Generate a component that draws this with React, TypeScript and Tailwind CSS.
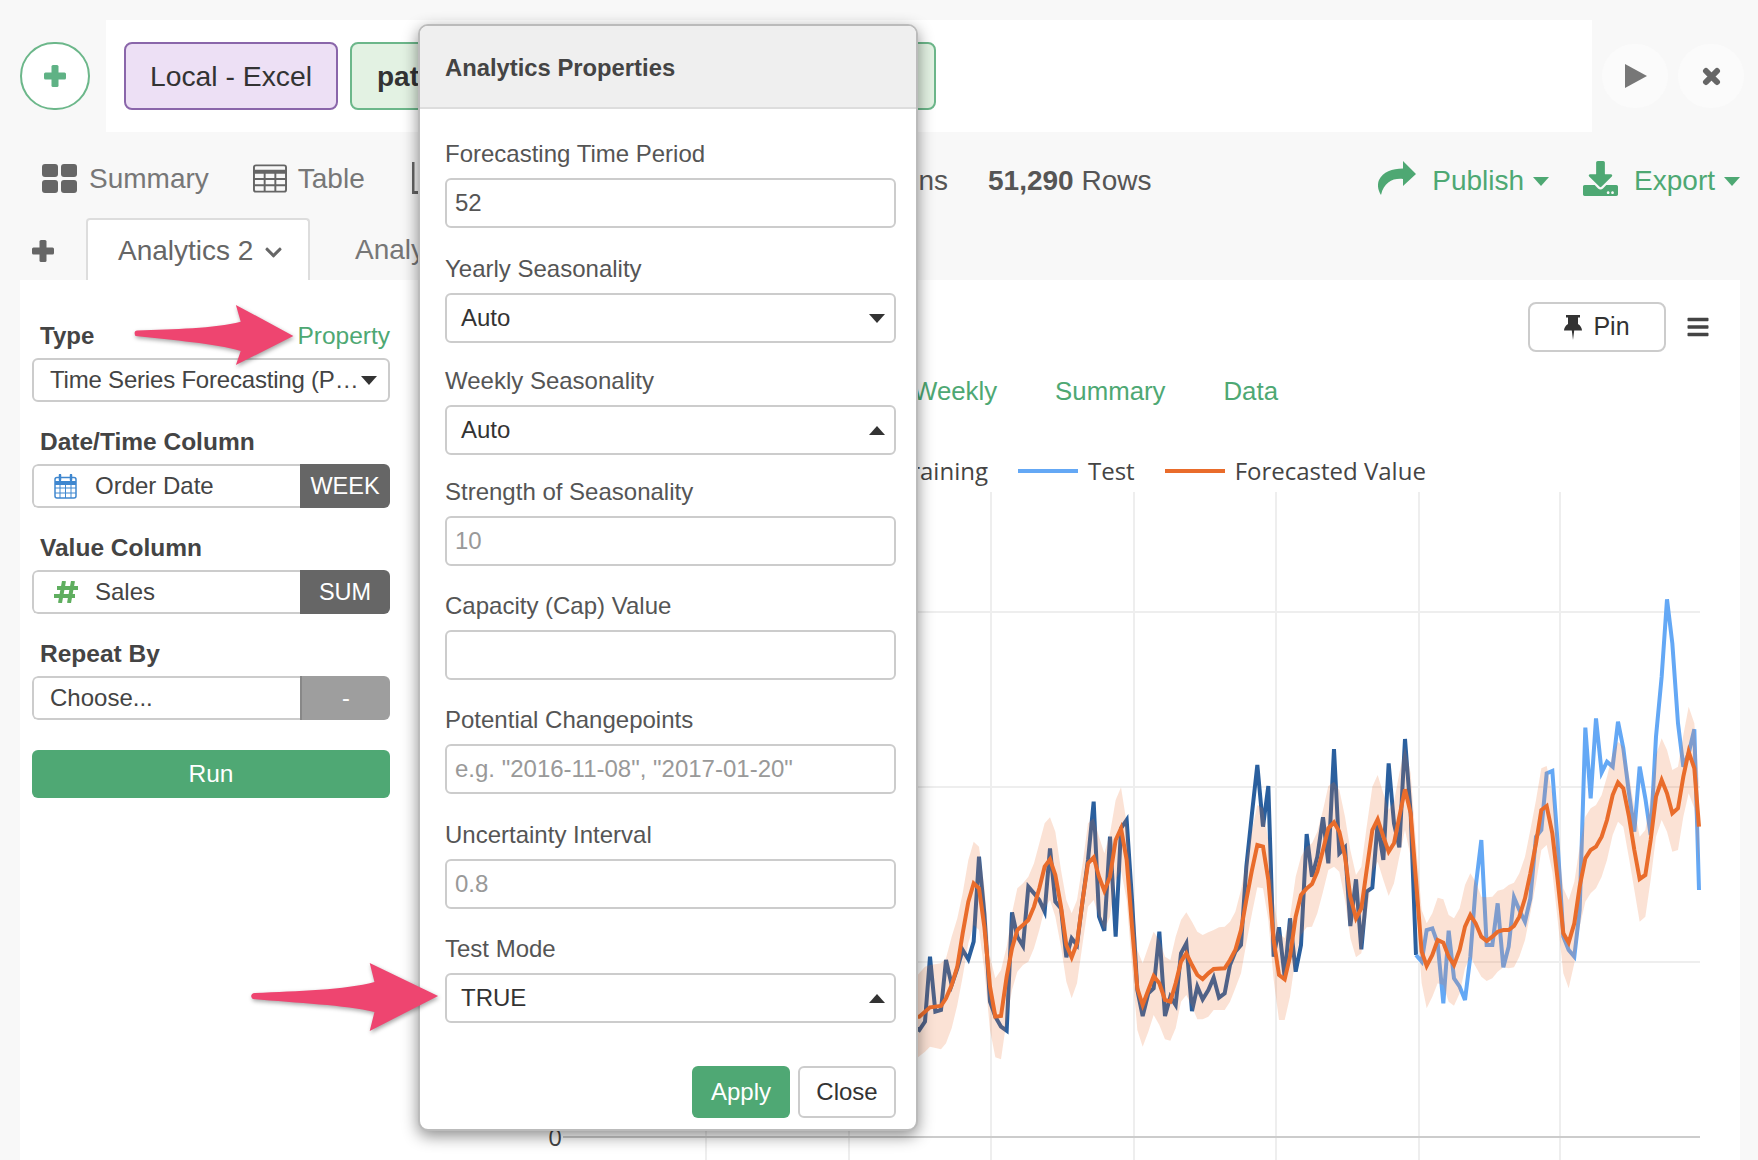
import { FaChevronDown, FaBars, FaDownload } from "react-icons/fa";

// chart points were read off two crops of the picture, so each set keeps its crop's origin
const toPage = (crop: string, ox: number, oy: number) =>
  crop
    .trim()
    .split(/;\s*/)
    .map((p) => {
      const [x, y] = p.split(",").map(Number);
      return [ox + x / 3, oy + y / 3];
    });

const series = (a: string, b: string) => [...toPage(a, 900, 700), ...toPage(b, 1300, 560)];
const pts = (list: number[][]) => list.map((p) => p.join(",")).join(" ");

const training = series(
  "50,985; 58,990; 75,965; 90,770; 106,935; 123,930; 138,780; 155,855; 172,805; 188,750; 205,778; 221,725; 237,470; 253,640; 270,905; 286,950; 303,980; 320,992; 336,637; 352,710; 369,738; 385,560; 402,580; 418,600; 434,635; 450,445; 466,605; 483,625; 499,772; 515,715; 531,735; 548,600; 564,480; 581,305; 597,650; 613,692; 630,410; 647,710; 663,385; 680,360; 696,600; 712,870; 728,948; 745,880; 761,865; 778,695; 795,948; 811,890; 827,915; 843,760; 859,730; 876,933; 892,860; 908,898; 925,870; 941,833; 957,893; 974,880; 990,795; 1006,755; 1023,735; 1039,500; 1056,340; 1072,195; 1089,380; 1105,258; 1121,770; 1137,682; 1154,830; 1170,655; 1187,815; 1203,735; 1220,402; 1236,530; 1252,470; 1269,352; 1285,490",
  "102,567; 118,880; 135,862; 151,1098; 168,958; 184,1168; 200,995; 217,983; 233,790; 250,900; 266,610; 282,790; 298,862; 315,537; 332,760; 348,1185"
);

const test = toPage(
  "348,1185; 365,1205; 380,1110; 397,1105; 413,1150; 430,1330; 446,1112; 462,1255; 479,1280; 495,1320; 511,1190; 527,980; 544,840; 560,1155; 577,1155; 593,1030; 610,1222; 626,1160; 642,1012; 658,1050; 675,1085; 691,1015; 708,830; 724,810; 740,640; 757,633; 773,850; 790,1130; 806,1170; 823,1190; 839,1050; 856,503; 872,715; 888,475; 905,638; 921,605; 938,620; 954,485; 970,565; 987,700; 1003,815; 1019,620; 1036,715; 1052,825; 1068,530; 1085,350; 1101,118; 1117,250; 1134,490; 1150,620; 1166,580; 1183,508; 1197,990",
  1300,
  560
);

const forecast = series(
  "50,950; 58,950; 75,935; 90,922; 123,918; 138,895; 155,855; 172,800; 188,700; 205,605; 221,550; 237,565; 253,680; 270,860; 286,950; 303,948; 320,830; 336,745; 352,690; 369,675; 385,660; 402,620; 418,565; 434,500; 450,478; 466,525; 483,620; 499,735; 515,772; 531,730; 548,600; 564,490; 581,472; 597,530; 613,572; 630,530; 647,420; 663,385; 680,480; 696,680; 712,865; 728,915; 745,870; 761,828; 778,850; 795,900; 811,905; 827,850; 843,785; 859,760; 876,795; 892,825; 908,837; 925,820; 941,807; 974,805; 990,780; 1006,750; 1023,690; 1039,600; 1056,510; 1072,435; 1089,440; 1105,540; 1121,720; 1137,825; 1154,838; 1170,770; 1187,650; 1203,585; 1220,565; 1236,552; 1252,515; 1269,450; 1285,385",
  "102,787; 118,815; 135,890; 151,1010; 168,1075; 184,1045; 200,930; 217,810; 233,778; 250,830; 266,875; 282,850; 298,770; 315,688; 332,760; 348,960; 365,1175; 380,1218; 397,1185; 413,1140; 430,1148; 446,1190; 462,1215; 479,1170; 495,1100; 511,1065; 527,1090; 544,1130; 560,1143; 577,1130; 593,1115; 610,1110; 626,1110; 642,1098; 658,1070; 675,1015; 691,940; 708,850; 724,750; 740,738; 757,820; 773,960; 790,1120; 806,1148; 823,1090; 839,980; 856,895; 872,870; 888,860; 905,830; 921,780; 938,705; 954,667; 970,685; 987,770; 1003,870; 1019,957; 1036,945; 1052,840; 1068,710; 1085,660; 1101,700; 1117,760; 1134,745; 1150,650; 1166,575; 1183,625; 1197,800"
);

const upper = series(
  "50,828; 75,800; 90,795; 123,790; 138,775; 155,710; 172,655; 188,580; 205,480; 221,425; 237,440; 253,560; 270,770; 286,835; 303,810; 320,740; 336,640; 352,565; 369,550; 385,530; 402,490; 418,430; 434,370; 450,352; 466,395; 483,510; 499,600; 515,640; 531,600; 548,490; 564,370; 581,355; 597,410; 613,460; 630,400; 647,300; 663,262; 680,370; 696,570; 712,750; 728,790; 745,740; 761,695; 778,720; 795,770; 811,780; 827,710; 843,660; 859,637; 876,665; 892,695; 908,705; 925,697; 941,690; 957,682; 974,680; 990,665; 1006,635; 1023,570; 1039,480; 1056,390; 1072,315; 1089,325; 1105,420; 1121,600; 1137,700; 1154,715; 1170,650; 1187,530; 1203,470; 1220,440; 1236,430; 1252,395; 1269,330; 1285,258",
  "102,665; 118,690; 135,770; 151,870; 168,945; 184,920; 200,800; 217,680; 233,645; 250,700; 266,750; 282,725; 298,640; 315,560; 332,640; 348,850; 365,1050; 380,1090; 397,1060; 413,1013; 430,1018; 446,1065; 462,1075; 479,1045; 495,975; 511,940; 527,965; 544,1010; 560,1012; 577,1010; 593,992; 610,988; 626,975; 642,968; 658,940; 675,890; 691,810; 708,720; 724,625; 740,618; 757,700; 773,840; 790,985; 806,1020; 823,965; 839,860; 856,770; 872,745; 888,735; 905,705; 921,650; 938,580; 954,545; 970,560; 987,645; 1003,745; 1019,830; 1036,810; 1052,715; 1068,585; 1085,535; 1101,570; 1117,630; 1134,620; 1150,525; 1166,440; 1183,490; 1197,670"
);

const lower = series(
  "50,1075; 75,1055; 90,1040; 123,1048; 138,1030; 155,985; 172,915; 188,830; 205,730; 221,675; 237,690; 253,810; 270,990; 286,1072; 303,1078; 320,960; 336,870; 352,815; 369,795; 385,785; 402,745; 418,690; 434,625; 450,600; 466,650; 483,740; 499,845; 515,895; 531,850; 548,730; 564,620; 581,600; 597,650; 613,690; 630,650; 647,540; 663,510; 680,600; 696,800; 712,990; 728,1040; 745,995; 761,945; 778,975; 795,1018; 811,1022; 827,985; 843,905; 859,885; 876,920; 892,958; 908,958; 925,950; 941,930; 974,930; 990,905; 1006,865; 1023,820; 1039,730; 1056,640; 1072,562; 1089,565; 1105,660; 1121,840; 1137,960; 1154,960; 1170,890; 1187,770; 1203,705; 1220,682; 1236,680; 1252,640; 1269,575; 1285,510",
  "102,920; 118,935; 135,1020; 151,1135; 168,1192; 184,1180; 200,1065; 217,935; 233,905; 250,960; 266,1008; 282,970; 298,890; 315,810; 332,890; 348,1050; 365,1270; 380,1345; 397,1310; 413,1270; 430,1275; 446,1325; 462,1337; 479,1300; 495,1225; 511,1190; 527,1220; 544,1250; 560,1263; 577,1255; 593,1235; 610,1222; 626,1225; 642,1222; 658,1190; 675,1140; 691,1060; 708,970; 724,870; 740,855; 757,935; 773,1080; 790,1240; 806,1285; 823,1210; 839,1100; 856,1025; 872,1000; 888,985; 905,950; 921,900; 938,825; 954,785; 970,800; 987,895; 1003,990; 1019,1085; 1036,1070; 1052,960; 1068,830; 1085,780; 1101,815; 1117,875; 1134,870; 1150,770; 1166,700; 1183,745; 1197,920"
);

const band = [...upper, ...[...lower].reverse()];

function Caret({ up, className }: { up?: boolean; className: string }) {
  return (
    <svg viewBox="0 0 16 9" className={className} fill="currentColor">
      <path d={up ? "M8 0 L16 9 H0 Z" : "M0 0 H16 L8 9 Z"} />
    </svg>
  );
}

function PlusIcon({ className }: { className: string }) {
  return (
    <svg viewBox="0 0 22 22" className={className} fill="currentColor">
      <rect x="7.500" y="0" width="7" height="22" rx="1.500" />
      <rect x="0" y="7.500" width="22" height="7" rx="1.500" />
    </svg>
  );
}

function CloseIcon() {
  return (
    <svg viewBox="0 0 19 19" className="w-[19px] h-[19px]" stroke="#666" strokeWidth="6" strokeLinecap="round">
      <path d="M4 4 L15 15 M15 4 L4 15" />
    </svg>
  );
}

function HashIcon() {
  return (
    <svg viewBox="0 0 24 22" className="w-[24px] h-[22px]" stroke="#5fae5f" strokeWidth="4">
      <path d="M10 0 L6 22 M19 0 L15 22 M3 7 H24 M0 15 H21" />
    </svg>
  );
}

function SummaryIcon() {
  return (
    <svg viewBox="0 0 35 29" className="w-[35px] h-[29px]" fill="#666">
      <rect x="0" y="0" width="16" height="13" rx="3" />
      <rect x="19" y="0" width="16" height="13" rx="3" />
      <rect x="0" y="16" width="16" height="13" rx="3" />
      <rect x="19" y="16" width="16" height="13" rx="3" />
    </svg>
  );
}

function TableIcon() {
  return (
    <svg viewBox="0 0 35 29" className="w-[34px] h-[29px]" fill="none" stroke="#666" strokeWidth="2">
      <rect x="1" y="1" width="33" height="27" rx="2" />
      <path d="M1 7.500 H34" strokeWidth="4" />
      <path d="M1 15 H34 M1 21.500 H34 M12 7 V28 M23 7 V28" />
    </svg>
  );
}

function ChartIcon() {
  return (
    <svg viewBox="0 0 35 32" className="w-[35px] h-[32px]" fill="#666">
      <path d="M0 0 H2.500 V29 H35 V32 H0 Z" />
      <rect x="8" y="17" width="6" height="9" />
      <rect x="17" y="8" width="6" height="18" />
    </svg>
  );
}

function ShareIcon() {
  return (
    <svg viewBox="0 0 38 34" className="w-[38px] h-[34px]" fill="#4ea873">
      <path d="M25 0 L38 13 L25 25 V18 C15 17 6 21 3 34 C0 29 -1 24 1 19 C5 11 14 7.500 25 7.500 Z" />
    </svg>
  );
}

function PinIcon() {
  return (
    <svg viewBox="0 0 18 25" className="w-[18px] h-[25px]" fill="#333">
      <path d="M2 0 H16 V2.500 H14 V9 C16.500 10.500 18 13 18 15.500 H10.200 L9 25 L7.800 15.500 H0 C0 13 1.500 10.500 4 9 V2.500 H2 Z" />
    </svg>
  );
}

function CalendarIcon() {
  return (
    <svg viewBox="0 0 23 25" className="w-[23px] h-[25px]" fill="none" stroke="#3f87cf" strokeWidth="1.500">
      <rect x="1" y="3.500" width="21" height="20.500" rx="2" />
      <path d="M1 9 H22" strokeWidth="4" />
      <path d="M1 14 H22 M1 19 H22 M6 9 V24 M11.500 9 V24 M17 9 V24" strokeWidth="1" />
      <path d="M6 1 V6 M17 1 V6" strokeWidth="2.500" strokeLinecap="round" />
    </svg>
  );
}

function Arrow({ className, d }: { className: string; d: string }) {
  return (
    <svg viewBox="0 0 200 70" preserveAspectRatio="none" className={className} fill="#ee4570">
      <path d={d} />
    </svg>
  );
}

function SideLabel({ children }: { children: string }) {
  return <div className="h-[30px] leading-[30px] px-2 text-[24.500px] font-bold text-[#444]">{children}</div>;
}

function ColumnField({
  icon,
  name,
  tag,
  tagClass,
}: {
  icon?: React.ReactNode;
  name: string;
  tag: string;
  tagClass: string;
}) {
  return (
    <div className="flex h-[44px] mt-[7px] mb-[25px] rounded-[6px] overflow-hidden">
      <div className="flex-1 flex items-center border-2 border-r-0 border-[#ccc] rounded-l-[6px]">
        {icon ? (
          <div className="w-[61px] pl-[20px] flex items-center shrink-0">{icon}</div>
        ) : (
          <div className="w-[16px] shrink-0" />
        )}
        <span className="text-[24px] text-[#444]">{name}</span>
      </div>
      <div className={`w-[90px] pt-[1px] flex items-center justify-center text-[23.500px] text-white ${tagClass}`}>
        {tag}
      </div>
    </div>
  );
}

const propertyFields = [
  { label: "Forecasting Time Period", value: "52", gap: "mb-[25px]" },
  { label: "Yearly Seasonality", select: "Auto", gap: "mb-[22px]" },
  { label: "Weekly Seasonality", select: "Auto", up: true, gap: "mb-[21px]" },
  { label: "Strength of Seasonality", placeholder: "10", gap: "mb-[24px]" },
  { label: "Capacity (Cap) Value", gap: "mb-[24px]" },
  { label: "Potential Changepoints", placeholder: 'e.g. "2016-11-08", "2017-01-20"', gap: "mb-[25px]" },
  { label: "Uncertainty Interval", placeholder: "0.8", gap: "mb-[24px]" },
  { label: "Test Mode", select: "TRUE", up: true, gap: "mb-0" },
];

export default function App() {
  return (
    <div className="relative w-[1758px] h-[1160px] overflow-hidden bg-[#f8f8f8] font-['Liberation_Sans',Arial,sans-serif]">
      {/* top step bar */}
      <div className="flex items-center pt-[20px]">
        <div className="ml-[20px] w-[70px] h-[68px] rounded-full border-2 border-[#6cb78a] bg-white flex items-center justify-center">
          <PlusIcon className="w-[22px] h-[22px] text-[#5fb285]" />
        </div>
        <div className="ml-[16px] w-[1486px] h-[112px] bg-white flex items-center pl-[18px] gap-[12px]">
          <div className="w-[214px] h-[68px] pt-[1px] border-2 border-[#8a66aa] bg-[#ede0f5] rounded-[8px] flex items-center justify-center text-[28.300px] text-[#333]">
            Local - Excel
          </div>
          <div className="w-[586px] h-[68px] pt-[1px] border-2 border-[#6cb78a] bg-[#e3f2e3] rounded-[8px] flex items-center pl-[25px] text-[28px] font-bold text-[#333]">
            pat
          </div>
        </div>
        <div className="ml-[10px] w-[66px] h-[64px] rounded-full bg-[#fbfbfb] flex items-center justify-center">
          <svg viewBox="0 0 22 24" className="w-[22px] h-[24px] ml-[2px]" fill="#777">
            <path d="M0 0 L22 12 L0 24 Z" />
          </svg>
        </div>
        <div className="ml-[10px] w-[66px] h-[64px] rounded-full bg-[#fbfbfb] flex items-center justify-center">
          <CloseIcon />
        </div>
      </div>

      {/* view switcher */}
      <div className="h-[86px] flex items-start pt-[28px] pl-[42px] pr-[18px] text-[28px] leading-[36px] text-[#777]">
        <div className="flex items-center h-[36px] w-[906px]">
          <SummaryIcon />
          <span className="ml-[12px] h-[36px] leading-[38px]">Summary</span>
          <span className="ml-[44px]">
            <TableIcon />
          </span>
          <span className="ml-[11px] h-[36px] leading-[38px]">Table</span>
          <span className="ml-[47px]">
            <ChartIcon />
          </span>
          <span className="ml-auto h-[36px] leading-[42px] text-[#555]">Columns</span>
        </div>
        <div className="ml-[40px] h-[36px] leading-[42px] text-[#555]">
          <span className="font-bold">51,290</span> Rows
        </div>
        <div className="ml-auto flex items-center h-[36px] text-[#4ea873]">
          <ShareIcon />
          <span className="ml-[16px] h-[36px] leading-[42px]">Publish</span>
          <Caret className="ml-[9px] mt-[6px] w-[16px] h-[9px]" />
          <FaDownload className="ml-[34px] text-[35px]" />
          <span className="ml-[16px] h-[36px] leading-[42px]">Export</span>
          <Caret className="ml-[9px] mt-[6px] w-[16px] h-[9px]" />
        </div>
      </div>

      {/* analytics tabs */}
      <div className="h-[62px] flex items-start text-[28px] text-[#777]">
        <PlusIcon className="ml-[32px] mt-[22px] w-[22px] h-[22px] text-[#666]" />
        <div className="ml-[32px] w-[224px] h-[62px] pt-[2px] bg-white border-2 border-b-0 border-[#ddd] rounded-t-[4px] flex items-center pl-[30px] text-[#666]">
          Analytics 2
          <FaChevronDown className="ml-[11px] mt-[3px] text-[19px]" />
        </div>
        <div className="ml-[45px] h-[62px] pt-[2px] flex items-center">Analytics</div>
      </div>

      {/* main panel */}
      <div className="ml-[20px] w-[1720px] h-[880px] bg-white flex">
        <div className="w-[370px] pl-[12px] pt-[41px] shrink-0">
          <div className="flex justify-between items-center h-[30px] pl-2">
            <span className="text-[24px] font-bold text-[#444]">Type</span>
            <span className="text-[24.500px] text-[#4ea873]">Property</span>
          </div>
          <div className="h-[44px] mt-[7px] mb-[25px] border-2 border-[#ccc] rounded-[6px] flex items-center pl-[16px] text-[24px] text-[#444]">
            <span className="whitespace-nowrap tracking-[-0.2px]">Time Series Forecasting (P…</span>
            <Caret className="ml-[3px] w-[16px] h-[9px] text-[#333]" />
          </div>

          <SideLabel>Date/Time Column</SideLabel>
          <ColumnField icon={<CalendarIcon />} name="Order Date" tag="WEEK" tagClass="bg-[#666]" />

          <SideLabel>Value Column</SideLabel>
          <ColumnField icon={<HashIcon />} name="Sales" tag="SUM" tagClass="bg-[#666]" />

          <SideLabel>Repeat By</SideLabel>
          <ColumnField name="Choose..." tag="-" tagClass="bg-[#9e9e9e] border-l-2 border-[#888]" />

          <div className="h-[48px] mt-[30px] rounded-[6px] bg-[#4fa874] flex items-center justify-center text-[24.500px] text-white">
            Run
          </div>
        </div>

        <div className="flex-1 min-w-0 pt-[22px]">
          <div className="flex justify-end items-center h-[50px] pr-[30px]">
            <div className="w-[138px] h-[50px] border-2 border-[#ccc] rounded-[8px] flex items-center justify-center gap-[11px] text-[25px] text-[#333]">
              <PinIcon />
              Pin
            </div>
            <FaBars className="ml-[20px] text-[#444] text-[24px]" />
          </div>

          <div className="mt-[23px] h-[32px] leading-[32px] flex pl-[523px] gap-[58px] text-[25.800px] text-[#4ea873]">
            <span>Weekly</span>
            <span>Summary</span>
            <span>Data</span>
          </div>

          <div className="mt-[48px] h-[32px] flex items-center pl-[507px] font-['Open_Sans',sans-serif] text-[24px] text-[#444]">
            <span>Training</span>
            <span className="ml-[30px] w-[60px] h-[4px] bg-[#64a8f5]" />
            <span className="ml-[10px]">Test</span>
            <span className="ml-[30px] w-[60px] h-[4px] bg-[#e96c2b]" />
            <span className="ml-[10px]">Forecasted Value</span>
          </div>

          <svg viewBox="390 490 1350 670" className="mt-[3px] w-[1350px] h-[670px] block" fill="none">
            {[706, 849, 991, 1134, 1276, 1419, 1560].map((x) => (
              <path key={x} d={`M${x} 492 V1160`} stroke="#eee" strokeWidth="2" />
            ))}
            {[612, 787, 962].map((y) => (
              <path key={y} d={`M563 ${y} H1700`} stroke="#eee" strokeWidth="2" />
            ))}
            <path d="M563 1137 H1700" stroke="#ccc" strokeWidth="2" />
            <text x="555" y="1146" textAnchor="middle" fontSize="24" fill="#444" fontFamily="Open Sans">
              0
            </text>
            <polyline points={pts(training)} stroke="#2a5f9e" strokeWidth="4" />
            <polyline points={pts(test)} stroke="#64a8f5" strokeWidth="4" />
            <polygon points={pts(band)} fill="#e96c2b" fillOpacity="0.2" />
            <polyline points={pts(forecast)} stroke="#e96c2b" strokeWidth="4" />
          </svg>
        </div>
      </div>

      {/* Analytics Properties popover */}
      <div className="absolute left-[418px] top-[24px] w-[500px] h-[1107px] bg-white border-2 border-[#bbb] rounded-[10px] shadow-[0_5px_16px_rgba(0,0,0,0.45)]">
        <div className="h-[83px] pt-[3px] bg-[#efefef] border-b-2 border-[#ddd] rounded-t-[8px] flex items-center pl-[25px] text-[23.800px] font-bold text-[#444]">
          Analytics Properties
        </div>
        <div className="pl-[25px] pr-[20px] pt-[29px]">
          {propertyFields.map((f) => (
            <div key={f.label} className={f.gap}>
              <div className="h-[30px] leading-[31px] mb-[10px] text-[24px] text-[#555]">{f.label}</div>
              {f.select ? (
                <div className="h-[50px] border-2 border-[#ccc] rounded-[6px] flex items-center pl-[14px] pr-[9px] text-[24px] text-[#333]">
                  {f.select}
                  <Caret up={f.up} className="ml-auto w-[16px] h-[9px]" />
                </div>
              ) : (
                <input
                  readOnly
                  value={f.value ?? ""}
                  placeholder={f.placeholder}
                  className="block w-full h-[50px] border-2 border-[#ccc] rounded-[6px] pl-[8px] text-[24px] text-[#555] placeholder:text-[#999] outline-none"
                />
              )}
            </div>
          ))}
          <div className="mt-[43px] flex justify-end gap-[8px] text-[24px]">
            <div className="w-[98px] h-[52px] rounded-[6px] bg-[#4fa874] text-white flex items-center justify-center">
              Apply
            </div>
            <div className="w-[98px] h-[52px] rounded-[6px] border-2 border-[#ccc] text-[#333] flex items-center justify-center">
              Close
            </div>
          </div>
        </div>
      </div>

      {/* callout arrows */}
      <Arrow
        className="absolute left-[133px] top-[304px] w-[162px] h-[62px] drop-shadow-[1px_2px_2px_rgba(0,0,0,0.35)]"
        d="M3 36 C1 33 2 30 5 30 C50 28 100 28 133 20 L127 1 L198 36 L127 69 L133 53 C100 44 50 41 3 36 Z"
      />
      <Arrow
        className="absolute left-[250px] top-[962px] w-[190px] h-[70px] drop-shadow-[1px_2px_2px_rgba(0,0,0,0.35)]"
        d="M3 37 C0 35 1 31 5 31 C50 29 100 28 131 20 L126 1 L198 34 L126 69 L131 50 C100 43 50 41 3 37 Z"
      />
    </div>
  );
}
